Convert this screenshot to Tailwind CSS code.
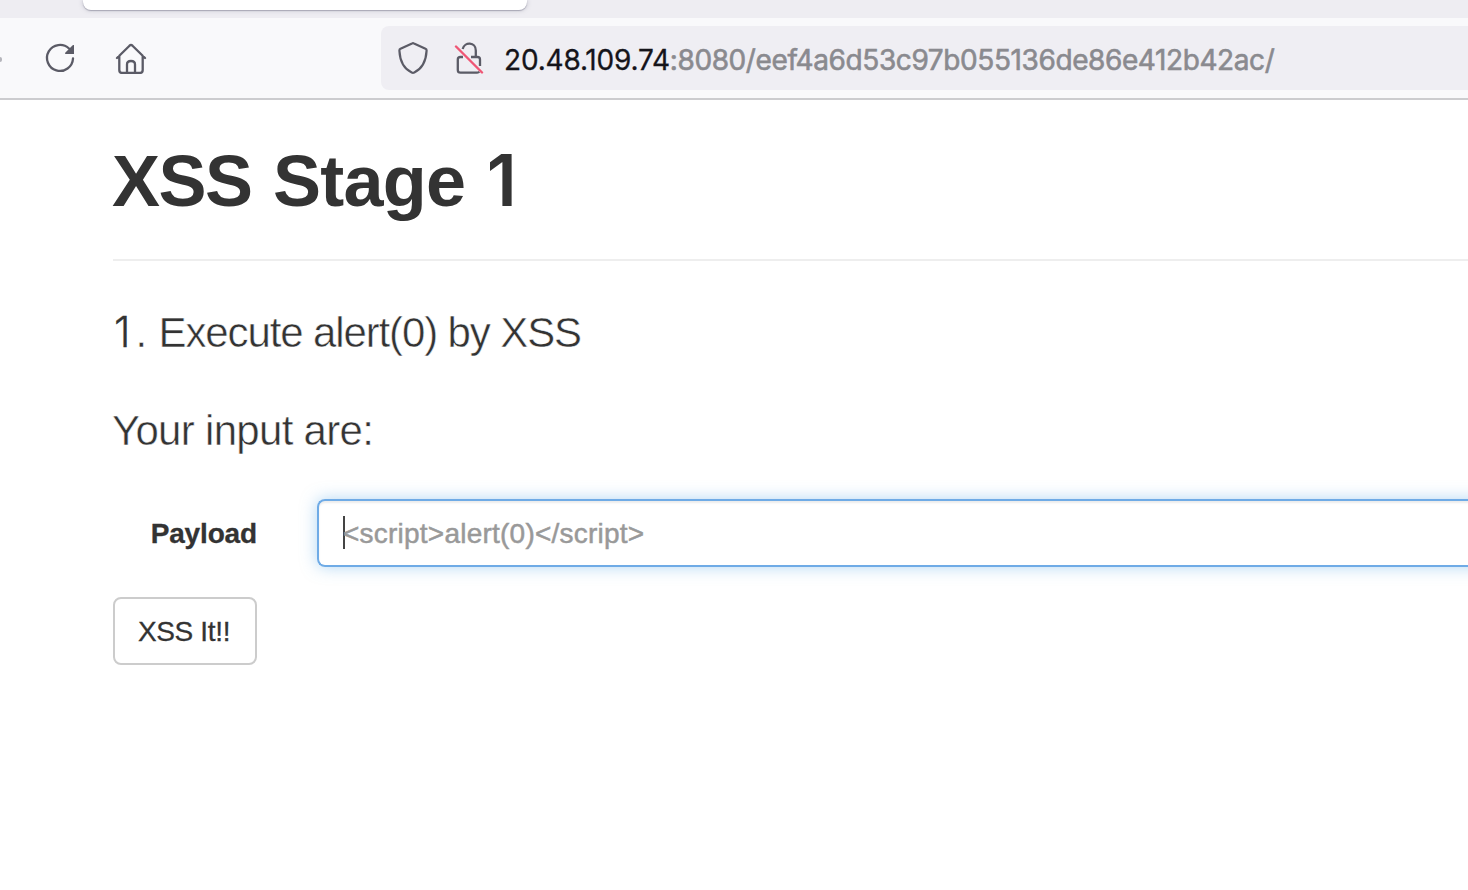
<!DOCTYPE html>
<html lang="en">
<head>
<meta charset="utf-8">
<title>XSS Stage 1</title>
<script src="https://cdn.jsdelivr.net/npm/@tailwindcss/browser@4"></script>
</head>
<body class="h-[890px] w-[1468px] overflow-hidden bg-white font-['Liberation_Sans',Arial,sans-serif] text-[#333]">
<header>
  <div class="h-[18px] overflow-hidden bg-[#eeedf2] pl-[83px]">
    <div class="h-2.5 w-[444px] rounded-b-lg bg-white shadow-[0_1px_1px_0_rgba(120,120,140,0.5),0_0_5px_rgba(120,120,140,0.4)]"></div>
  </div>
  <nav class="flex h-[82px] items-start border-b-2 border-[#cccccf] bg-[#f9f9fb]">
    <div class="mt-[39px] h-[5px] w-0.5 shrink-0 rounded-r bg-[#b5b5bb]"></div>
    <svg class="mt-6 ml-[42px] size-8 shrink-0" viewBox="0 0 32 32" fill="none">
      <path d="M25 6.500A13 13 0 1 0 29 16.500" stroke="#5b5b66" stroke-width="2.3" stroke-linecap="round"/>
      <path d="M30 3v9h-8.300q-1.300-.3-.5-1.300l7.500-7.400q.7-.6 1.300-.3z" fill="#5b5b66"/>
    </svg>
    <svg class="mt-6 ml-[39px] size-8 shrink-0" viewBox="0 0 32 32" fill="none" stroke="#5b5b66" stroke-width="2.3" stroke-linecap="round" stroke-linejoin="round">
      <path d="M2 16 14.500 3.700q1.500-1.400 3 0L30 16M4.300 14v14q0 3 3 3h17.400q3 0 3-3V14"/>
      <path d="M12 31V22.500q0-3.500 4-3.500t4 3.500V31"/>
    </svg>
    <div class="mt-2 ml-[234px] flex h-16 flex-1 items-center rounded-l-lg bg-[#efeef3]">
      <svg class="ml-4 size-8 shrink-0" viewBox="0 0 32 32" fill="none" stroke="#5b5b66" stroke-width="2.2" stroke-linejoin="round">
        <path d="M15 1.400q1-.5 2 0l11.500 5.300q1.200.6 1.100 2C29 20 24.500 27 17.300 30.500q-1.300.6-2.600 0C7.500 27 3 20 2.400 8.700q-.1-1.400 1.100-2z"/>
      </svg>
      <svg class="ml-6 size-8 shrink-0" viewBox="0 0 32 32" fill="none" stroke="#5b5b66" stroke-width="2.300">
        <path d="M9.700 7C11.500-.4 22.800-.2 22.800 8.500V15M10 15H7.500Q4.800 15 4.800 17.500V28q0 2.700 2.700 2.700h16.600q1.500 0 2.200-1M18 15h6.500Q27 15 27 17.500V24"/>
        <path d="M3 4.500 29 30.500" stroke="#ef5675" stroke-width="2.4" stroke-linecap="round"/>
      </svg>
      <div class="mt-[3px] ml-[19px] flex text-[28px] leading-8 font-['Inter',sans-serif] whitespace-nowrap text-[#15141a]"><span class="tracking-[-0.2px] [-webkit-text-stroke:0.3px_#15141a]">20.48.109.74</span><span class="tracking-[-0.4px] text-[#8a8a8f] [-webkit-text-stroke:0.6px_#8a8a8f]">:8080/eef4a6d53c97b055136de86e412b42ac/</span></div>
    </div>
  </nav>
</header>
<main class="pl-[113px]">
  <h1 class="h-[161px] border-b-2 border-[#eee] pt-[41px] text-[72px] leading-[80px] font-bold whitespace-nowrap"><span class="-ml-px tracking-[-1.500px]">XSS</span><span class="ml-0.5 tracking-[-0.7px]"> Stage </span><span class="ml-0.5 font-['Inter',sans-serif] text-[71px] leading-none font-semibold">1</span></h1>
  <p class="mt-[42px] text-[42px] leading-[60px] tracking-[-1.12px] whitespace-nowrap [-webkit-text-stroke:0.5px_white]"><span class="mr-0.5 ml-px font-['Inter',sans-serif] text-[42px] leading-none font-light [-webkit-text-stroke:0.3px_#333]">1</span><span class="mr-0.5 ml-1">.</span> Execute alert(0) by XSS</p>
  <p class="mt-[38px] text-[42px] leading-[60px] tracking-[-0.7px] whitespace-nowrap [-webkit-text-stroke:0.5px_white]"><span class="-ml-px">Your input are:</span></p>
  <form class="mt-[38px]">
    <div class="flex items-center">
      <label class="mt-px w-[144px] text-right text-[28px] leading-10 font-bold tracking-[-0.15px] [-webkit-text-stroke:0.3px_#333]">Payload</label>
      <div class="-mr-5 ml-[60px] flex h-[68px] flex-1 items-center rounded-l-lg border-2 border-r-0 border-[#6fabe6] pl-6 text-[28px] whitespace-nowrap text-[#999] shadow-[inset_0_2px_2px_rgba(0,0,0,0.075),0_0_16px_rgba(102,175,233,0.5)]">
        <span class="-mt-0.5 h-[33px] w-0.5 bg-[#444]"></span><span class="mt-0.5 -ml-0.5 tracking-[0.23px] [-webkit-text-stroke:0.5px_#999]">&lt;script&gt;alert(0)&lt;/script&gt;</span>
      </div>
    </div>
    <button type="button" class="mt-[30px] block h-[68px] w-[144px] rounded-lg border-2 border-[#ccc] pt-0.5 pr-0.5 text-[28px] tracking-[-0.35px] whitespace-nowrap [-webkit-text-stroke:0.3px_#333]">XSS It!!</button>
  </form>
</main>
</body>
</html>
